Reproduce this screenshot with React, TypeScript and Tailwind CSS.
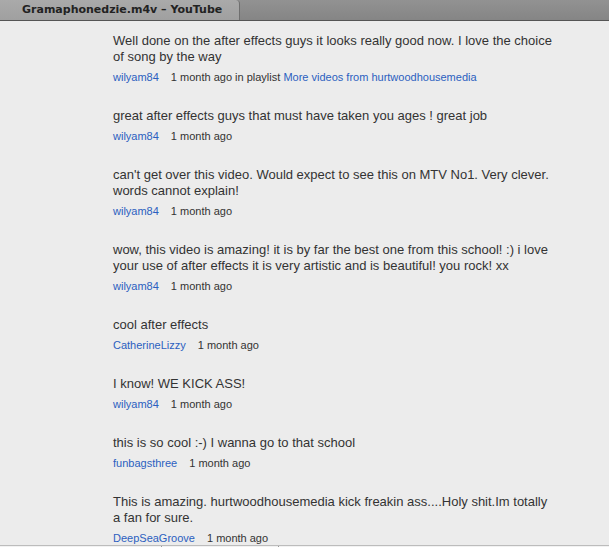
import React from 'react';

interface Comment {
  lines: string[];
  user: string;
  when: string;
  playlist?: string;
}

const comments: Comment[] = [
  {
    lines: ['Well done on the after effects guys it looks really good now. I love the choice', 'of song by the way'],
    user: 'wilyam84',
    when: '1 month ago',
    playlist: 'More videos from hurtwoodhousemedia',
  },
  { lines: ['great after effects guys that must have taken you ages ! great job'], user: 'wilyam84', when: '1 month ago' },
  {
    lines: ["can't get over this video. Would expect to see this on MTV No1. Very clever.", 'words cannot explain!'],
    user: 'wilyam84',
    when: '1 month ago',
  },
  {
    lines: [
      'wow, this video is amazing! it is by far the best one from this school! :) i love',
      'your use of after effects it is very artistic and is beautiful! you rock! xx',
    ],
    user: 'wilyam84',
    when: '1 month ago',
  },
  { lines: ['cool after effects'], user: 'CatherineLizzy', when: '1 month ago' },
  { lines: ['I know! WE KICK ASS!'], user: 'wilyam84', when: '1 month ago' },
  { lines: ['this is so cool :-) I wanna go to that school'], user: 'funbagsthree', when: '1 month ago' },
  {
    lines: ['This is amazing. hurtwoodhousemedia kick freakin ass....Holy shit.Im totally', 'a fan for sure.'],
    user: 'DeepSeaGroove',
    when: '1 month ago',
  },
];

export default function App() {
  return (
    <div className="flex h-[547px] w-[609px] flex-col overflow-hidden bg-[#ececec] font-['Liberation_Sans',Arial,sans-serif]">
      {/* Tab strip */}
      <div className="flex h-[21px] shrink-0 border-b border-[#555] bg-gradient-to-b from-[#929292] to-[#858585]">
        <div className="flex w-[240px] items-center rounded-tr-[4px] border-r border-[#6f6f6f] bg-gradient-to-b from-[#aaaaaa] to-[#a0a0a0] pl-[22px] font-['DejaVu_Sans',sans-serif] text-[11px] font-bold text-[#222]">
          Gramaphonedzie.m4v – YouTube
        </div>
      </div>

      {/* Comments */}
      <div className="flex-1 overflow-hidden pl-[113px] pt-[12px]">
        {comments.map((c, i) => (
          <div key={i} className="mb-[24px]">
            <div className="whitespace-nowrap text-[13px] leading-4 text-[#333]">
              {c.lines.map((l, j) => (
                <div key={j}>{l}</div>
              ))}
            </div>
            <div className="mt-[5px] whitespace-nowrap text-[11px] leading-[14px] text-[#333]">
              <span className="text-[#2b5fc0]">{c.user}</span>
              <span className="ml-[12px]">{c.when}</span>
              {c.playlist && (
                <>
                  <span> in playlist </span>
                  <span className="text-[#2b5fc0]">{c.playlist}</span>
                </>
              )}
            </div>
          </div>
        ))}
      </div>

      {/* Bottom edge */}
      <div className="flex h-[2px] shrink-0 border-t border-[#bcbcbc] bg-[#f2f2f2]">
        <div className="w-[162px] border-r border-[#9a9a9a]" />
        <div className="w-[117px] border-r border-[#9a9a9a]" />
      </div>
    </div>
  );
}
